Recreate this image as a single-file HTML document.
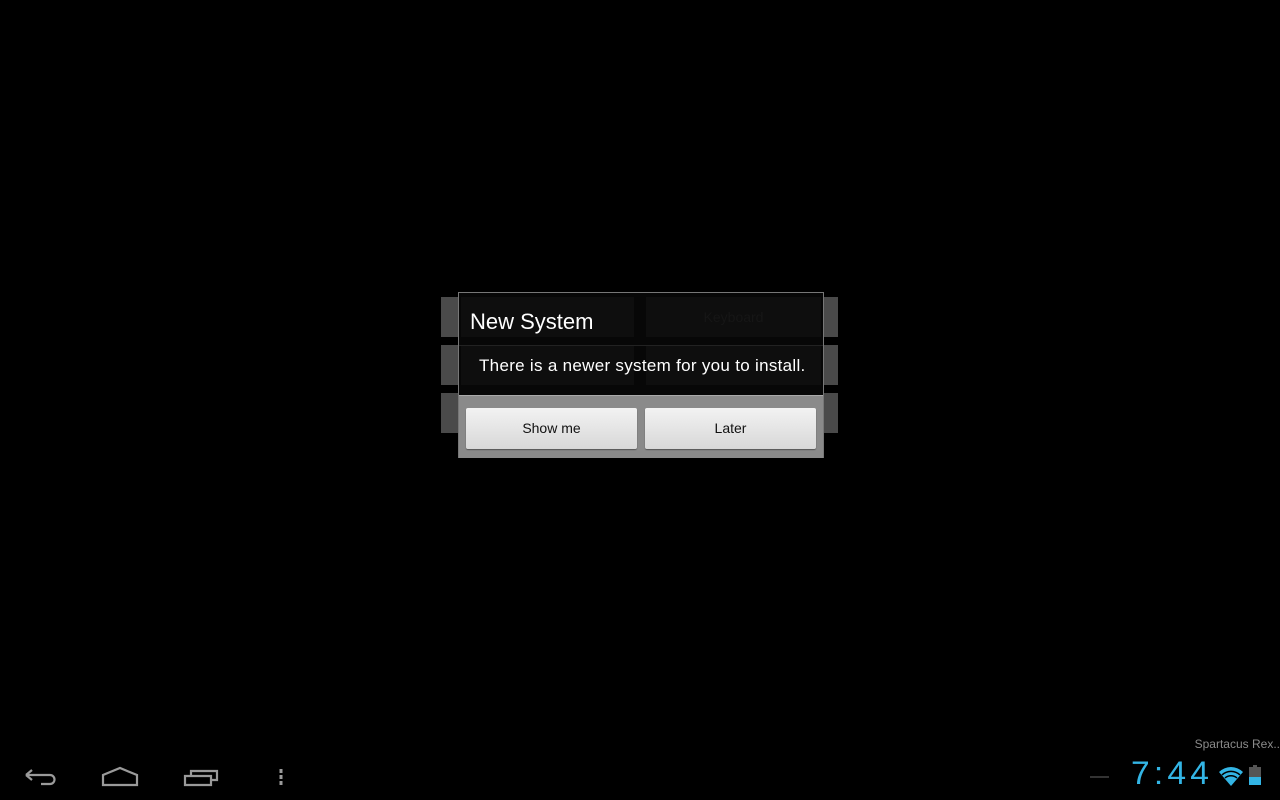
<!DOCTYPE html>
<html><head><style>
body{margin:0;width:1280px;height:800px;background:#000;position:relative;overflow:hidden;font-family:"Liberation Sans",sans-serif}
.a{position:absolute;white-space:nowrap}
.g{background:#4a4a4a}
.btn{position:absolute;top:408px;width:171px;height:41px;background:linear-gradient(#f2f2f2,#d8d8d8);border-radius:2px;box-shadow:0 1px 1px #555;color:#111;font-size:14px;text-align:center;line-height:41px}
</style></head><body>
<div class="a g" style="left:441px;top:297px;width:20px;height:40px"></div>
<div class="a g" style="left:441px;top:345px;width:20px;height:40px"></div>
<div class="a g" style="left:441px;top:393px;width:20px;height:40px"></div>
<div class="a g" style="left:820px;top:297px;width:18px;height:40px"></div>
<div class="a g" style="left:820px;top:345px;width:18px;height:40px"></div>
<div class="a g" style="left:820px;top:393px;width:18px;height:40px"></div>
<div class="a" style="left:458px;top:292px;width:364px;height:164px;border:1px solid #777;background:#070707">
 <div class="a" style="left:2px;top:4px;width:173px;height:40px;background:#0e0e0e"></div>
 <div class="a" style="left:187px;top:4px;width:175px;height:40px;background:#0e0e0e;color:#161616;font-size:14px;text-align:center;line-height:40px">Keyboard</div>
 <div class="a" style="left:2px;top:52px;width:173px;height:40px;background:#0e0e0e"></div>
 <div class="a" style="left:187px;top:52px;width:175px;height:40px;background:#0e0e0e"></div>
 <div class="a" style="left:0;top:52px;width:364px;height:1px;background:#222"></div>
 <div class="a" style="left:11px;top:16px;color:#fff;font-size:22px">New System</div>
 <div class="a" style="left:20px;top:63px;color:#fff;font-size:17px;letter-spacing:0.3px">There is a newer system for you to install.</div>
 <div class="a" style="left:0;top:102px;width:364px;height:62px;background:#8a8a8a;border-top:1px solid #aaa"></div>
</div>
<div class="btn" style="left:466px">Show me</div>
<div class="btn" style="left:645px">Later</div>
<svg class="a" style="left:0;top:740px" width="320" height="60" fill="none" stroke="#9a9a9a" stroke-width="2.2">
<path d="M26 35 L32 30 M26 35 L32 40 M26 35 H50 a4.5 4.5 0 0 1 0 9 H41"/>
<path d="M103 45 V35 L120 28 L137 35 V45 Z"/>
<path d="M185 36 H211 V45 H185 Z M191 36 V31 H217 V40 H211"/>
<path d="M281 29 v4 M281 35 v4 M281 41 v4" stroke-width="3"/>
</svg>
<div class="a" style="right:0;top:737px;color:#8a8a8a;font-size:12px">Spartacus Rex..</div>
<div class="a" style="left:1090px;top:776px;width:19px;height:2px;background:#333"></div>
<div class="a" style="left:1131px;top:755px;color:#33b5e5;font-size:32px;font-weight:100;letter-spacing:4px;transform:scaleX(1.05);transform-origin:left">7:44</div>
<svg class="a" style="left:1217px;top:764px" width="28" height="24"><path d="M2 8 A17 17 0 0 1 26 8 L14 22 Z" fill="#33b5e5"/><path d="M5 11 A13 13 0 0 1 23 11 M8 14 A9 9 0 0 1 20 14" stroke="#000" stroke-width="1.5" fill="none"/></svg>
<div class="a" style="left:1249px;top:767px;width:12px;height:18px;background:#555"></div>
<div class="a" style="left:1249px;top:777px;width:12px;height:8px;background:#33b5e5"></div>
<div class="a" style="left:1253px;top:765px;width:4px;height:2px;background:#555"></div>
</body></html>
